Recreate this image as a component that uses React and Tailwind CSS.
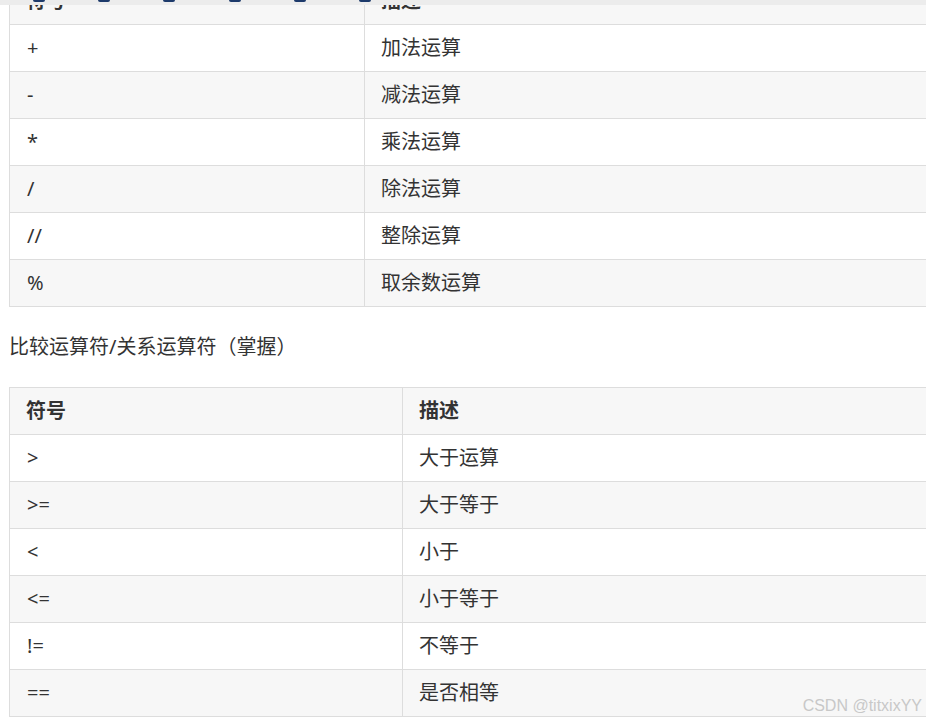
import React from "react";

const arithmetic = [
  ["+", "加法运算"],
  ["-", "减法运算"],
  ["*", "乘法运算"],
  ["/", "除法运算"],
  ["//", "整除运算"],
  ["%", "取余数运算"],
];

const comparison = [
  [">", "大于运算"],
  [">=", "大于等于"],
  ["<", "小于"],
  ["<=", "小于等于"],
  ["!=", "不等于"],
  ["==", "是否相等"],
];

const toolbarMarks = [33, 98, 163, 229, 294, 359];

const OpTable = ({ rows, firstCol, className }) => {
  return (
    <div className={`w-[1200px] ml-[9px] border-l border-t border-[#dddddd] ${className}`}>
      <div className="flex h-[47px] border-b border-[#dddddd] bg-[#f7f7f7] font-bold text-[#333333]">
        <div className={`${firstCol} flex items-center pl-[16px] border-r border-[#dddddd]`}>符号</div>
        <div className="flex-1 flex items-center pl-[16px]">描述</div>
      </div>
      {rows.map((row, i) => (
        <div
          key={i}
          className={`flex h-[47px] border-b border-[#dddddd] text-[#333333] ${i % 2 === 1 ? "bg-[#f7f7f7]" : "bg-white"}`}
        >
          <div className={`${firstCol} flex items-center pl-[17px] border-r border-[#dddddd]`}>{row[0]}</div>
          <div className="flex-1 flex items-center pl-[16px]">{row[1]}</div>
        </div>
      ))}
    </div>
  );
};

export default function App() {
  return (
    <div
      className="relative w-[926px] h-[720px] overflow-hidden bg-white text-[20px]"
      style={{ fontFamily: '"Noto Sans", "Noto Sans CJK SC", sans-serif' }}
    >
      <OpTable rows={arithmetic} firstCol="w-[355px]" className="-mt-[23px]" />

      <p className="h-[80px] flex items-center pl-[9px] text-[20px] text-[#333333]">
        比较运算符/关系运算符（掌握）
      </p>

      <OpTable rows={comparison} firstCol="w-[393px]" className="" />

      {/* sticky toolbar edge peeking in at the top */}
      <div className="absolute top-0 left-0 right-0 h-[5px] bg-[#ececec]">
        {toolbarMarks.map((x) => (
          <span
            key={x}
            className="absolute top-0 w-[12px] h-[2px] border-b-2 border-x border-[#1d3a6b] rounded-b-[4px]"
            style={{ left: x }}
          />
        ))}
      </div>

      <div
        className="absolute right-[4px] top-[694px] text-[16px] text-[#c8c8c8]"
        style={{ fontFamily: '"Liberation Sans", Arial, sans-serif' }}
      >
        CSDN @titxixYY
      </div>
    </div>
  );
}
